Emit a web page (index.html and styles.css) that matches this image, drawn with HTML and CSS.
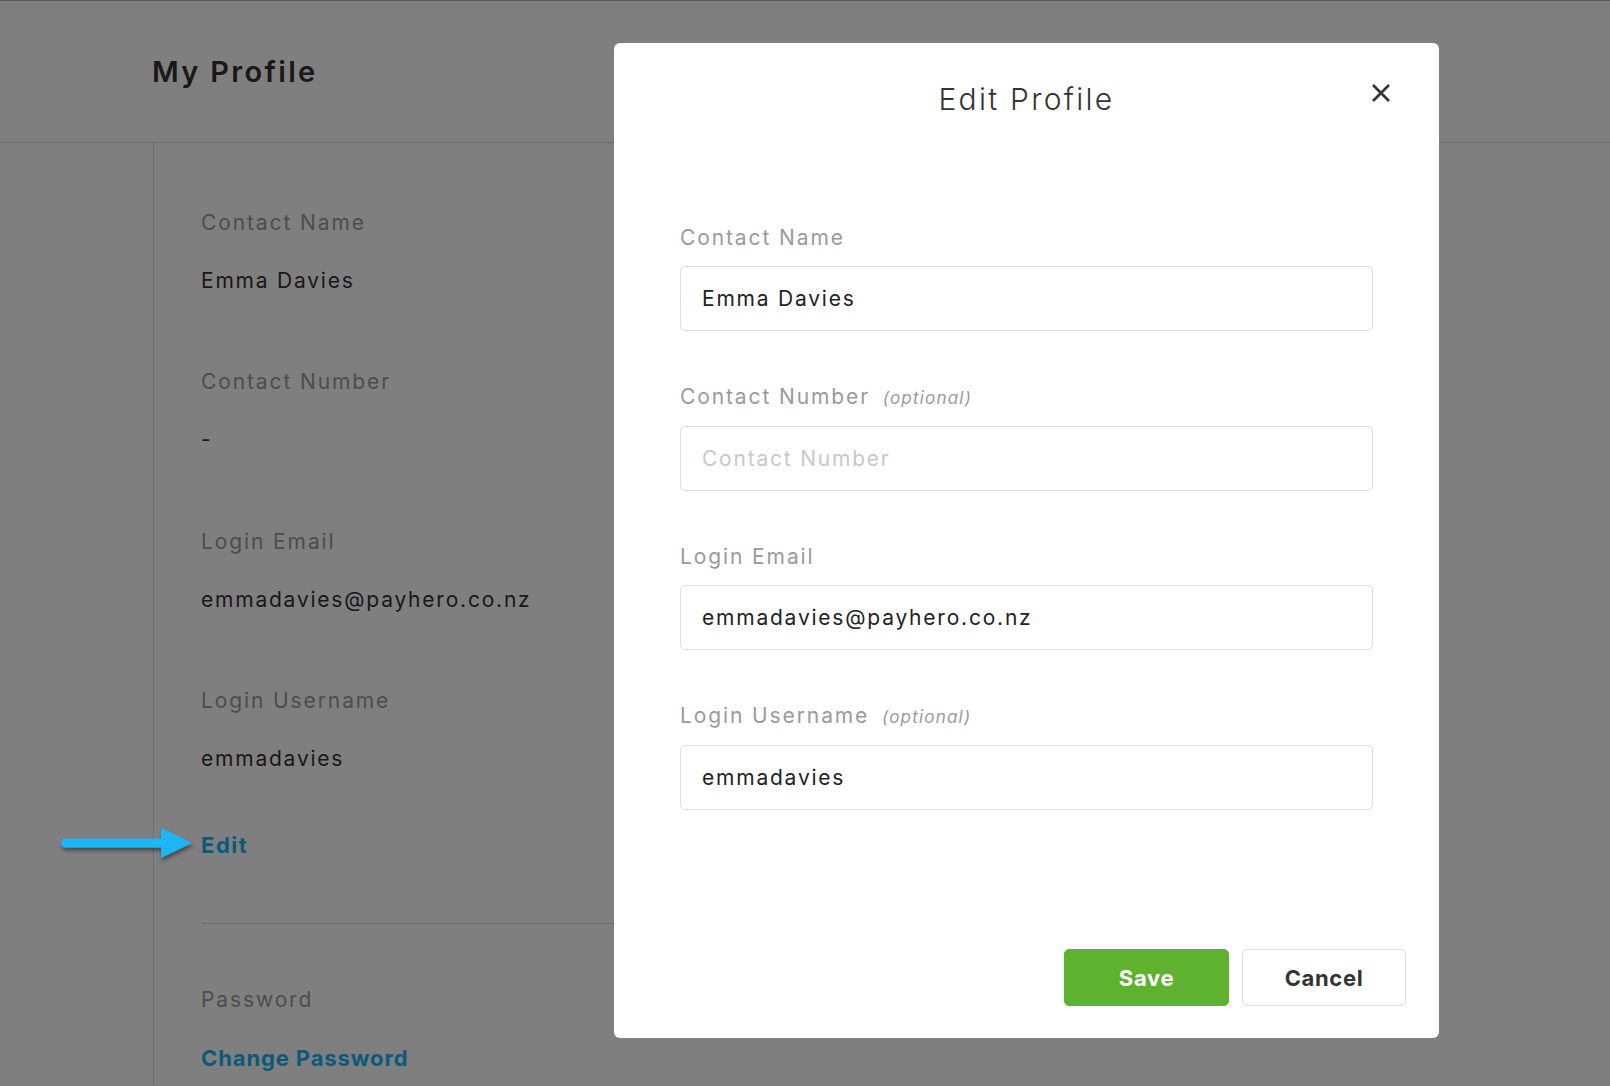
FILE: index.html
```html
<!DOCTYPE html>
<html lang="en">
<head>
<meta charset="utf-8">
<title>My Profile</title>
<link rel="stylesheet" href="styles.css">
</head>
<body>
  <div class="page">
    <header class="page-header">
      <h1 class="page-title">My Profile</h1>
    </header>
    <div class="page-body">
      <aside class="sidebar"></aside>
      <main class="profile">
        <div class="fields">
          <div class="field">
            <div class="field-label">Contact Name</div>
            <div class="field-value">Emma Davies</div>
          </div>
          <div class="field">
            <div class="field-label">Contact Number</div>
            <div class="field-value">-</div>
          </div>
          <div class="field">
            <div class="field-label">Login Email</div>
            <div class="field-value">emmadavies@payhero.co.nz</div>
          </div>
          <div class="field">
            <div class="field-label">Login Username</div>
            <div class="field-value">emmadavies</div>
          </div>
        </div>
        <a class="link edit-link" href="#">Edit</a>
        <div class="divider"></div>
        <div class="field password-field">
          <div class="field-label">Password</div>
          <a class="link" href="#">Change Password</a>
        </div>
      </main>
    </div>
  </div>

  <div class="overlay"></div>

  <svg class="arrow" width="150" height="45" viewBox="0 0 150 45" aria-hidden="true">
    <defs>
      <filter id="arrowShadow" x="-20%" y="-40%" width="140%" height="180%">
        <feDropShadow dx="1" dy="3" stdDeviation="2" flood-color="#000" flood-opacity="0.45"/>
      </filter>
    </defs>
    <g filter="url(#arrowShadow)" fill="#1fb5f8" stroke="#1fb5f8">
      <line x1="15.5" y1="21" x2="116" y2="21" stroke-width="9" stroke-linecap="round"/>
      <polygon points="111,5.5 142,21 111,36" stroke="none"/>
    </g>
  </svg>

  <div class="modal" role="dialog" aria-label="Edit Profile">
    <h2 class="modal-title">Edit Profile</h2>
    <button class="close" type="button" aria-label="Close">
      <svg width="20" height="20" viewBox="0 0 20 20">
        <path d="M2 2 L18 18 M18 2 L2 18" stroke="#333" stroke-width="2.6" fill="none"/>
      </svg>
    </button>
    <form class="modal-form">
      <div class="form-group">
        <label class="form-label">Contact Name</label>
        <input class="form-input" type="text" value="Emma Davies">
      </div>
      <div class="form-group">
        <label class="form-label">Contact Number <span class="optional">(optional)</span></label>
        <input class="form-input" type="text" placeholder="Contact Number">
      </div>
      <div class="form-group">
        <label class="form-label">Login Email</label>
        <input class="form-input" type="text" value="emmadavies@payhero.co.nz">
      </div>
      <div class="form-group">
        <label class="form-label">Login Username <span class="optional">(optional)</span></label>
        <input class="form-input" type="text" value="emmadavies">
      </div>
    </form>
    <div class="modal-footer">
      <button class="btn btn-save" type="button">Save</button>
      <button class="btn btn-cancel" type="button">Cancel</button>
    </div>
  </div>
</body>
</html>
```

FILE: styles.css
```css
* {
  box-sizing: border-box;
}

html,
body {
  margin: 0;
  padding: 0;
}

body {
  width: 1610px;
  height: 1086px;
  overflow: hidden;
  position: relative;
  background: #ffffff;
  color: #333333;
  font-family: Inter, "Open Sans", "Liberation Sans", sans-serif;
}

/* ---------- underlying page ---------- */
.page {
  height: 1086px;
}

.page-header {
  height: 143px;
  border-top: 1px solid #b4b4b4;
  border-bottom: 1px solid #dcdcdc;
  padding: 53px 0 0 152px;
}

.page-title {
  margin: 0;
  font-size: 29px;
  line-height: 36px;
  font-weight: 600;
  letter-spacing: 0.08em;
  color: #333333;
}

.page-body {
  display: flex;
  height: 943px;
}

.sidebar {
  flex: none;
  width: 154px;
  border-right: 1px solid #dcdcdc;
}

.profile {
  display: flex;
  flex-direction: column;
  align-items: flex-start;
  width: 950px;
  padding: 66.5px 0 0 47px;
}

.fields {
  display: flex;
  flex-direction: column;
  gap: 75.5px;
}

.field {
  display: flex;
  flex-direction: column;
  gap: 32px;
}

.field-label {
  font-size: 21px;
  line-height: 26px;
  color: #9a9a9a;
  letter-spacing: 0.09em;
}

.field-value {
  font-size: 21px;
  line-height: 26px;
  color: #333333;
  letter-spacing: 0.085em;
}

.link {
  font-size: 22px;
  line-height: 26px;
  font-weight: 700;
  color: #17b5f2;
  text-decoration: none;
  letter-spacing: 0.04em;
}

.edit-link {
  margin-top: 60px;
  letter-spacing: 0.07em;
}

.divider {
  align-self: stretch;
  height: 1px;
  margin-top: 65px;
  background: #dcdcdc;
}

.password-field {
  margin-top: 63px;
}

/* ---------- overlay ---------- */
.overlay {
  position: absolute;
  inset: 0;
  background: rgba(0, 0, 0, 0.5);
}

.arrow {
  position: absolute;
  left: 50px;
  top: 822px;
}

/* ---------- modal ---------- */
.modal {
  position: absolute;
  left: 614px;
  top: 43px;
  width: 825px;
  height: 995px;
  background: #ffffff;
  border-radius: 6px;
  display: flex;
  flex-direction: column;
}

.modal-title {
  margin: 38px 0 0;
  text-align: center;
  font-size: 30px;
  line-height: 36px;
  font-weight: 300;
  color: #333333;
  letter-spacing: 0.075em;
}

.close {
  position: absolute;
  right: 48px;
  top: 40px;
  width: 20px;
  height: 20px;
  padding: 0;
  border: 0;
  background: transparent;
  display: flex;
}

.modal-form {
  display: flex;
  flex-direction: column;
  gap: 53.4px;
  margin: 108px 0 0;
  padding: 0 66px;
}

.form-group {
  display: flex;
  flex-direction: column;
  gap: 14.6px;
}

.form-label {
  font-size: 21px;
  line-height: 26px;
  color: #9a9a9a;
  letter-spacing: 0.09em;
}

.optional {
  font-style: italic;
  font-size: 17px;
  margin-left: 5px;
  letter-spacing: 0.07em;
}

.form-input {
  width: 100%;
  height: 65px;
  border: 1px solid #dcdcdc;
  border-radius: 5px;
  padding: 0 21px;
  font-family: inherit;
  font-size: 21px;
  color: #222222;
  letter-spacing: 0.085em;
  background: #ffffff;
  outline: none;
}

.form-input::placeholder {
  color: #c8c8c8;
}

.modal-footer {
  margin-top: auto;
  display: flex;
  justify-content: flex-end;
  gap: 13px;
  padding: 0 33px 32px;
}

.btn {
  height: 57px;
  border-radius: 5px;
  font-family: inherit;
  font-size: 22px;
  font-weight: 700;
  letter-spacing: 0.03em;
  cursor: pointer;
}

.btn-save {
  width: 165px;
  border: 1px solid #5fb230;
  background: #5fb230;
  color: #ffffff;
}

.btn-cancel {
  width: 164px;
  border: 1px solid #dddddd;
  background: #ffffff;
  color: #333333;
}
```
